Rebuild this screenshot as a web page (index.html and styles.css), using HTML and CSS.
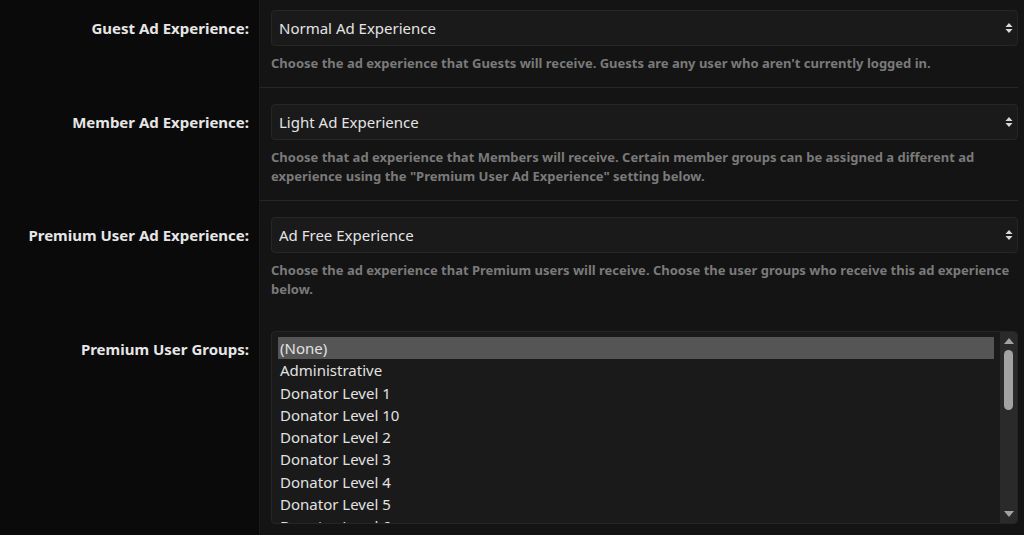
FILE: index.html
```html
<!DOCTYPE html>
<html lang="en">
<head>
<meta charset="UTF-8" />
<meta name="viewport" content="width=device-width, initial-scale=1" />
<title>Ad Experience Options</title>
<link rel="stylesheet" href="styles.css">
</head>
<body>

<div class="options">

  <div class="row first">
    <div class="label"><label for="guest">Guest Ad Experience:</label></div>
    <div class="field">
      <div class="select-wrap">
        <select id="guest">
          <option>Normal Ad Experience</option>
          <option>Light Ad Experience</option>
          <option>Ad Free Experience</option>
        </select>
        <svg class="arrows" width="8" height="12" viewBox="0 0 8 12"><path d="M4 1 L7.5 5 H0.5 Z M4 11 L7.5 7 H0.5 Z" fill="#d8d8d8"/></svg>
      </div>
      <p class="hint">Choose the ad experience that Guests will receive. Guests are any user who aren't currently logged in.</p>
    </div>
  </div>

  <div class="row">
    <div class="label"><label for="member">Member Ad Experience:</label></div>
    <div class="field">
      <div class="select-wrap">
        <select id="member">
          <option>Light Ad Experience</option>
          <option>Normal Ad Experience</option>
          <option>Ad Free Experience</option>
        </select>
        <svg class="arrows" width="8" height="12" viewBox="0 0 8 12"><path d="M4 1 L7.5 5 H0.5 Z M4 11 L7.5 7 H0.5 Z" fill="#d8d8d8"/></svg>
      </div>
      <p class="hint">Choose that ad experience that Members will receive. Certain member groups can be assigned a different ad experience using the "Premium User Ad Experience" setting below.</p>
    </div>
  </div>

  <div class="row no-sep">
    <div class="label"><label for="premium">Premium User Ad Experience:</label></div>
    <div class="field">
      <div class="select-wrap">
        <select id="premium">
          <option>Ad Free Experience</option>
          <option>Light Ad Experience</option>
          <option>Normal Ad Experience</option>
        </select>
        <svg class="arrows" width="8" height="12" viewBox="0 0 8 12"><path d="M4 1 L7.5 5 H0.5 Z M4 11 L7.5 7 H0.5 Z" fill="#d8d8d8"/></svg>
      </div>
      <p class="hint">Choose the ad experience that Premium users will receive. Choose the user groups who receive this ad experience below.</p>
    </div>
  </div>

  <div class="row no-sep groups">
    <div class="label"><label>Premium User Groups:</label></div>
    <div class="field">
      <div class="listbox">
        <ul class="items">
          <li class="selected">(None)</li>
          <li>Administrative</li>
          <li>Donator Level 1</li>
          <li>Donator Level 10</li>
          <li>Donator Level 2</li>
          <li>Donator Level 3</li>
          <li>Donator Level 4</li>
          <li>Donator Level 5</li>
          <li>Donator Level 6</li>
          <li>Donator Level 7</li>
        </ul>
        <div class="scrollbar">
          <span class="up"></span>
          <span class="track"><span class="thumb"></span></span>
          <span class="down"></span>
        </div>
      </div>
    </div>
  </div>

</div>

</body>
</html>
```

FILE: styles.css
```css
html, body {
  margin: 0;
  padding: 0;
  background: #141414;
  height: 100%;
  overflow: hidden;
}
body {
  font-family: "Noto Sans", "Open Sans", Arial, sans-serif;
  color: #e0e0e0;
}
.options {
  display: flex;
  flex-direction: column;
  background: linear-gradient(to right, #0a0a0a 259px, #1a1a1a 259px, #1a1a1a 260px, #141414 260px);
  min-height: 100%;
}
.row {
  display: grid;
  grid-template-columns: 260px 1fr;
}
.label {
  text-align: right;
  padding: 16px 11px 0 0;
}
.label label {
  display: block;
  height: 36px;
  line-height: 36px;
  font-weight: bold;
  font-size: 15px;
  color: #e6e6e6;
}
.field {
  padding: 16px 0 14px 11px;
  margin-right: 6px;
  border-bottom: 1px solid #262626;
}
.row.first .label,
.row.first .field {
  padding-top: 10px;
}
.row.groups .label,
.row.groups .field {
  padding-top: 17px;
}
.row.no-sep .field {
  border-bottom-color: transparent;
}
.select-wrap {
  position: relative;
}
select {
  appearance: none;
  -webkit-appearance: none;
  display: block;
  width: 100%;
  height: 36px;
  margin: 0;
  padding: 0 24px 0 7px;
  background: #1a1a1a;
  border: 1px solid #262626;
  border-radius: 4px;
  color: #e4e4e4;
  font-family: inherit;
  font-size: 15px;
  outline: none;
}
.arrows {
  position: absolute;
  right: 5px;
  top: 12px;
  pointer-events: none;
}
.hint {
  margin: 8px 0 0 0;
  font-size: 13px;
  font-weight: bold;
  line-height: 19px;
  color: #7a7a7a;
}
.listbox {
  display: flex;
  height: 191px;
  background: #1a1a1a;
  border: 1px solid #252525;
  border-radius: 4px;
  overflow: hidden;
}
.items {
  flex: 1;
  list-style: none;
  margin: 0;
  padding: 5px 6px 0 6px;
  overflow: hidden;
}
.items li {
  height: 22.3px;
  line-height: 22.3px;
  padding-left: 2px;
  font-size: 15px;
  color: #e2e2e2;
  white-space: nowrap;
}
.items li.selected {
  background: #555555;
}
.scrollbar {
  width: 17px;
  background: #2a2a2a;
  display: flex;
  flex-direction: column;
  align-items: center;
}
.up, .down {
  width: 0;
  height: 0;
  border-left: 5px solid transparent;
  border-right: 5px solid transparent;
  margin: 6px 0;
}
.up {
  border-bottom: 6px solid #a3a3a3;
}
.down {
  border-top: 6px solid #a3a3a3;
}
.track {
  flex: 1;
  width: 100%;
  display: flex;
  justify-content: center;
}
.thumb {
  width: 9px;
  height: 60px;
  border-radius: 5px;
  background: #a3a3a3;
}
```
